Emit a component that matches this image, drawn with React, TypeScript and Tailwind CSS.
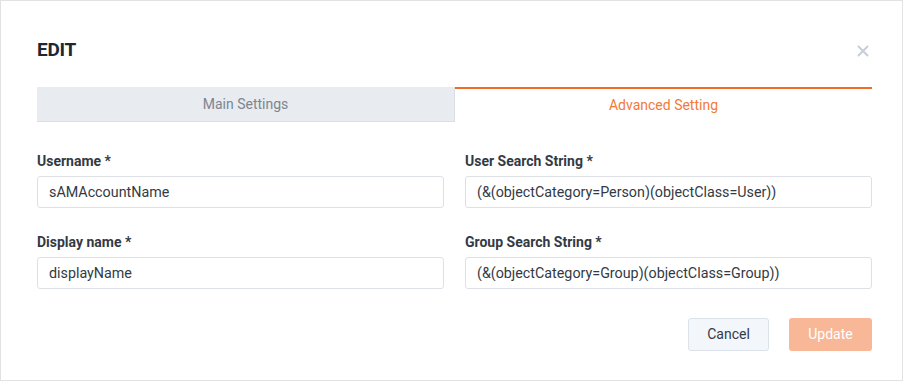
import React from 'react';

const Field: React.FC<{ label: string; value: string }> = ({ label, value }) => (
  <div className="flex flex-col">
    <label className="text-[14px] font-bold text-[#333a44] leading-[17px] mb-[6px]">{label}</label>
    <input
      readOnly
      value={value}
      className="h-[32px] w-full rounded-[3px] border border-[#dde1e6] bg-white px-[11px] text-[14.3px] text-[#333a44] outline-none"
    />
  </div>
);

export default function App() {
  return (
    <div className="w-[903px] h-[381px] border border-[#e2e2e2] bg-white font-['Roboto',sans-serif]">
      <div className="pl-[36px] pr-[30px]">
        <div className="flex items-center justify-between pt-[36px] h-[62px]">
          <h2 className="text-[19px] font-bold text-[#1f2733] tracking-[-0.3px]">EDIT</h2>
          <svg width="12" height="12" viewBox="0 0 12 12" className="mr-[3px] mt-[2px]">
            <path d="M1.5 1.5 L10.5 10.5 M10.5 1.5 L1.5 10.5" stroke="#c8ced8" strokeWidth="2" strokeLinecap="round" />
          </svg>
        </div>

        <div className="mt-[24px] flex h-[35px]">
          <button className="flex-1 bg-[#e8ebef] border-b border-r border-[#dbdfe5] text-[14px] text-[#7d8592]">
            Main Settings
          </button>
          <button className="flex-1 border-t-2 border-[#f26b21] text-[14px] text-[#f27a38]">
            Advanced Setting
          </button>
        </div>

        <div className="mt-[31px] grid grid-cols-2 gap-x-[21px] gap-y-[26px]">
          <Field label="Username *" value="sAMAccountName" />
          <Field label="User Search String *" value="(&(objectCategory=Person)(objectClass=User))" />
          <Field label="Display name *" value="displayName" />
          <Field label="Group Search String *" value="(&(objectCategory=Group)(objectClass=Group))" />
        </div>

        <div className="mt-[29px] flex justify-end gap-[20px]">
          <button className="h-[33px] w-[81px] rounded-[3px] border border-[#dce2ea] bg-[#f3f6fa] text-[14px] text-[#333a44]">
            Cancel
          </button>
          <button className="h-[33px] w-[83px] rounded-[3px] bg-[#f8b797] text-[14px] text-white">
            Update
          </button>
        </div>
      </div>
    </div>
  );
}
